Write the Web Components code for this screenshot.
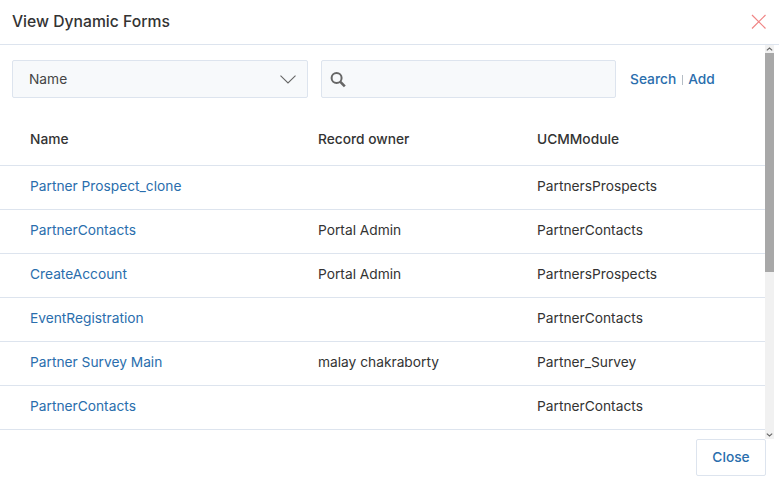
<!DOCTYPE html>
<html lang="en">
<head>
<meta charset="utf-8">
<title>View Dynamic Forms</title>
<style>
html, body { margin: 0; height: 100%; background: #fff; }
body { font: 13.75px/20px Inter, "Liberation Sans", sans-serif; color: #333; overflow: hidden; }
</style>
</head>
<body>
<df-dialog heading="View Dynamic Forms">
  <df-toolbar></df-toolbar>
  <df-table></df-table>
  <df-button slot="footer">Close</df-button>
</df-dialog>

<script>
const dialogTemplate = document.createElement("template");
dialogTemplate.innerHTML = `
<style>
:host { display: flex; flex-direction: column; width: 779px; height: 483px; }
.head {
  box-sizing: border-box;
  display: flex;
  align-items: center;
  justify-content: space-between;
  padding: 0 13px 0 12px;
  border-bottom: 1px solid #dde4ee;
  flex: none;
  height: 45px;
}
h1 { margin: 0; font-size: 15.7px; font-weight: 500; color: #333; line-height: 20px; }
.head svg { display: block; margin-top: -2px; }
.middle { display: flex; height: 394px; flex: none; overflow: hidden; padding-right: 5px; }
.content { flex: 1; min-width: 0; }
.bar { width: 9px; flex: none; background: #f1f1f1; display: flex; flex-direction: column; }
.arrow { height: 8px; display: flex; align-items: center; justify-content: center; flex: none; }
.thumb { height: 219px; background: #a8a8a8; flex: none; }
.rest { flex: 1; }
.foot { display: flex; justify-content: flex-end; padding-right: 13px; }
</style>
<div class="head">
  <h1></h1>
  <svg width="15" height="15" viewBox="0 0 15 15"><path d="M1 1 14.500 14.500M14.500 1 1 14.500" stroke="#f08585" stroke-width="1.200" fill="none"/></svg>
</div>
<div class="middle">
  <div class="content"><slot></slot></div>
  <div class="bar">
    <div class="arrow"><svg width="7" height="4" viewBox="0 0 7 4"><path d="M.8 3.400 3.500 1l2.700 2.400" stroke="#666" stroke-width="1.100" fill="none"/></svg></div>
    <div class="thumb"></div>
    <div class="rest"></div>
    <div class="arrow"><svg width="7" height="4" viewBox="0 0 7 4"><path d="M.8.6 3.500 3 6.200.6" stroke="#666" stroke-width="1.100" fill="none"/></svg></div>
  </div>
</div>
<div class="foot"><slot name="footer"></slot></div>
`;

customElements.define(
  "df-dialog",
  class extends HTMLElement {
    constructor() {
      super();
      const shadowRoot = this.attachShadow({ mode: "open" });
      shadowRoot.append(dialogTemplate.content.cloneNode(true));
    }
    connectedCallback() {
      this.shadowRoot.querySelector("h1").textContent = this.getAttribute("heading");
    }
  }
);

const toolbarTemplate = document.createElement("template");
toolbarTemplate.innerHTML = `
<style>
:host { display: flex; align-items: center; padding: 15px 0 0 12px; }
.field {
  box-sizing: border-box;
  height: 38px;
  background: #f7f9fb;
  border: 1px solid #dde4ee;
  border-radius: 2px;
  display: flex;
  align-items: center;
}
.select { width: 296px; padding: 0 11px 0 16px; justify-content: space-between; color: #444; }
.search { width: 295px; margin-left: 13px; padding-left: 8px; }
.links { display: flex; align-items: center; margin-left: 14px; font-weight: 500; color: #2a6ead; }
.sep { width: 1px; height: 10px; background: #b5bdc5; margin: 1px 5px 0 6px; }
svg { display: block; }
</style>
<div class="field select">
  <span>Name</span>
  <svg width="16" height="9" viewBox="0 0 16 9"><path d="M.5.7 8 8 15.500.7" stroke="#666" stroke-width="1.100" fill="none"/></svg>
</div>
<div class="field search">
  <svg width="16" height="17" viewBox="0 0 16 17"><circle cx="6.600" cy="6.900" r="5" stroke="#666" stroke-width="2" fill="none"/><path d="m10.400 10.800 4.400 4.600" stroke="#666" stroke-width="2.600" fill="none"/></svg>
</div>
<div class="links"><span>Search</span><span class="sep"></span><span>Add</span></div>
`;

customElements.define(
  "df-toolbar",
  class extends HTMLElement {
    constructor() {
      super();
      const shadowRoot = this.attachShadow({ mode: "open" });
      shadowRoot.append(toolbarTemplate.content.cloneNode(true));
    }
  }
);

const tableTemplate = document.createElement("template");
tableTemplate.innerHTML = `
<style>
:host { display: block; margin-top: 22px; color: #333; }
.row {
  display: grid;
  grid-template-columns: 288px 219px 1fr;
  align-items: center;
  height: 44px;
  padding: 0 0 3px 30px;
  box-sizing: border-box;
  border-bottom: 1px solid #dde4ee;
}
.row.top { height: 46px; font-weight: 500; padding-bottom: 8px; }
a { color: #2a6ead; text-decoration: none; }
</style>
<div class="row top"><span>Name</span><span>Record owner</span><span>UCMModule</span></div>
<div id="rows"></div>
`;

const forms = [
  ["Partner Prospect_clone", "", "PartnersProspects"],
  ["PartnerContacts", "Portal Admin", "PartnerContacts"],
  ["CreateAccount", "Portal Admin", "PartnersProspects"],
  ["EventRegistration", "", "PartnerContacts"],
  ["Partner Survey Main", "malay chakraborty", "Partner_Survey"],
  ["PartnerContacts", "", "PartnerContacts"],
];

customElements.define(
  "df-table",
  class extends HTMLElement {
    constructor() {
      super();
      const shadowRoot = this.attachShadow({ mode: "open" });
      shadowRoot.append(tableTemplate.content.cloneNode(true));
      const rows = shadowRoot.getElementById("rows");
      forms.forEach(([name, owner, module]) => {
        const row = document.createElement("div");
        row.classList.add("row");
        row.innerHTML = `<span><a href="#"></a></span><span></span><span></span>`;
        row.querySelector("a").textContent = name;
        row.children[1].textContent = owner;
        row.children[2].textContent = module;
        rows.append(row);
      });
    }
  }
);

const buttonTemplate = document.createElement("template");
buttonTemplate.innerHTML = `
<style>
:host { display: inline-block; }
button {
  box-sizing: border-box;
  width: 70px;
  height: 37px;
  padding: 0 0 2px;
  background: #fff;
  border: 1px solid #dde4ee;
  border-radius: 2px;
  color: #2a6ead;
  font: 500 13.75px Inter, "Liberation Sans", sans-serif;
}
</style>
<button><slot></slot></button>
`;

customElements.define(
  "df-button",
  class extends HTMLElement {
    constructor() {
      super();
      const shadowRoot = this.attachShadow({ mode: "open" });
      shadowRoot.append(buttonTemplate.content.cloneNode(true));
    }
  }
);
</script>
</body>
</html>
